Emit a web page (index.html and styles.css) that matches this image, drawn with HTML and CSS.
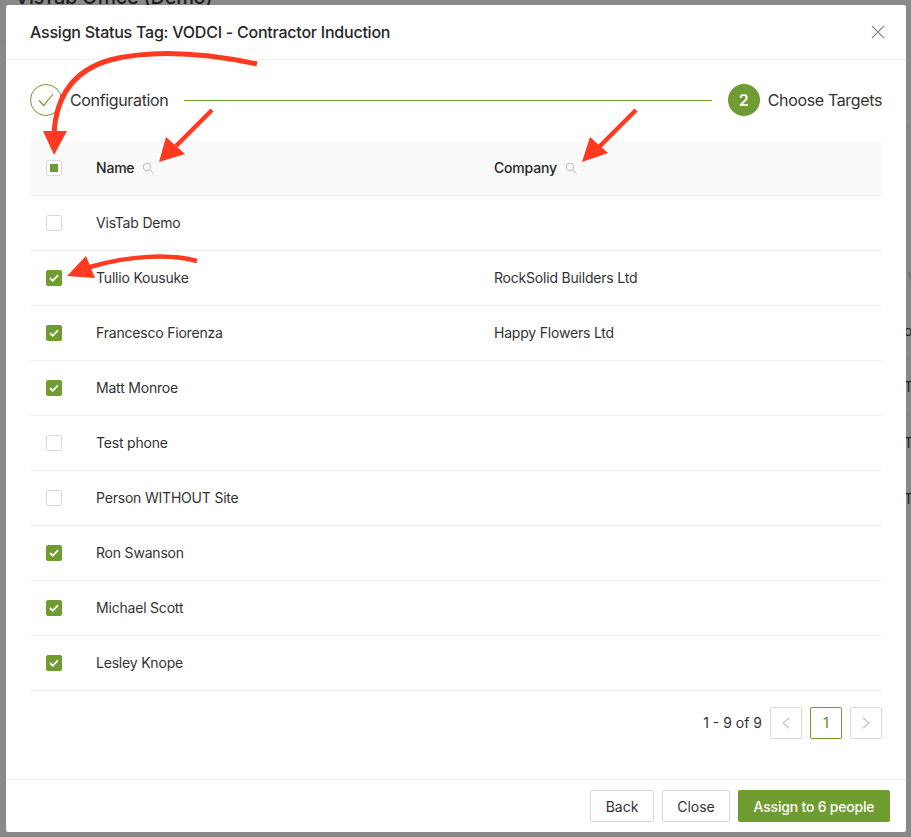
FILE: index.html
```html
<!DOCTYPE html>
<html lang="en">
<head>
<meta charset="utf-8">
<title>Assign Status Tag</title>
<link rel="stylesheet" href="styles.css">
</head>
<body>
<div class="backdrop">
  <div class="bg-title">VisTab Office (Demo)</div>
  <div class="bg-line bg-l1"></div>
  <div class="bg-line bg-l2"></div>
  <div class="bg-line bg-l3"></div>
  <div class="bg-line bg-l4"></div>
  <div class="bg-line bg-l5"></div>
  <div class="bg-line bg-l6"></div>
  <svg class="bg-caret" width="4" height="10" viewBox="0 0 4 10"><path d="M0 0h4v10Z" fill="#777"/></svg>
  <span class="bg-glyph bg-g1">o</span>
  <span class="bg-glyph bg-g2">T</span>
  <span class="bg-glyph bg-g3">T</span>
  <span class="bg-glyph bg-g4">T</span>
</div>
<main class="modal">
  <header class="modal-header">
    <h1 class="modal-title">Assign Status Tag: VODCI - Contractor Induction</h1>
    <svg class="close-icon" width="14" height="14" viewBox="0 0 14 14"><path d="M1 1l12 12M13 1L1 13" stroke="#8c8c8c" stroke-width="1.2" fill="none"/></svg>
  </header>
  <section class="modal-body">
    <div class="steps">
      <span class="step-circle step-done"><svg width="16" height="14" viewBox="0 0 16 14"><path d="M1 7.5l4.8 5L15 1" stroke="#6f9c30" stroke-width="1.2" fill="none"/></svg></span>
      <span class="step-label">Configuration</span>
      <span class="step-line"></span>
      <span class="step-circle step-active">2</span>
      <span class="step-label">Choose Targets</span>
    </div>
    <table class="people">
      <thead>
        <tr>
          <th class="col-check"><span class="box box-partial"></span></th>
          <th class="col-name"><span class="th-inner">Name <svg class="search" width="12" height="12" viewBox="0 0 12 12"><circle cx="5" cy="5" r="3.8" stroke="#bfbfbf" fill="none"/><path d="M7.8 7.8L11.5 11.5" stroke="#bfbfbf" fill="none"/></svg></span></th>
          <th class="col-company"><span class="th-inner">Company <svg class="search" width="12" height="12" viewBox="0 0 12 12"><circle cx="5" cy="5" r="3.8" stroke="#bfbfbf" fill="none"/><path d="M7.8 7.8L11.5 11.5" stroke="#bfbfbf" fill="none"/></svg></span></th>
        </tr>
      </thead>
      <tbody>
        <tr><td><span class="box"></span></td><td>VisTab Demo</td><td></td></tr>
        <tr><td><span class="box box-on"><svg width="10" height="8" viewBox="0 0 10 8"><path d="M1 4l2.8 2.8L9 1.2" stroke="#fff" stroke-width="1.8" fill="none"/></svg></span></td><td>Tullio Kousuke</td><td>RockSolid Builders Ltd</td></tr>
        <tr><td><span class="box box-on"><svg width="10" height="8" viewBox="0 0 10 8"><path d="M1 4l2.8 2.8L9 1.2" stroke="#fff" stroke-width="1.8" fill="none"/></svg></span></td><td>Francesco Fiorenza</td><td>Happy Flowers Ltd</td></tr>
        <tr><td><span class="box box-on"><svg width="10" height="8" viewBox="0 0 10 8"><path d="M1 4l2.8 2.8L9 1.2" stroke="#fff" stroke-width="1.8" fill="none"/></svg></span></td><td>Matt Monroe</td><td></td></tr>
        <tr><td><span class="box"></span></td><td>Test phone</td><td></td></tr>
        <tr><td><span class="box"></span></td><td>Person WITHOUT Site</td><td></td></tr>
        <tr><td><span class="box box-on"><svg width="10" height="8" viewBox="0 0 10 8"><path d="M1 4l2.8 2.8L9 1.2" stroke="#fff" stroke-width="1.8" fill="none"/></svg></span></td><td>Ron Swanson</td><td></td></tr>
        <tr><td><span class="box box-on"><svg width="10" height="8" viewBox="0 0 10 8"><path d="M1 4l2.8 2.8L9 1.2" stroke="#fff" stroke-width="1.8" fill="none"/></svg></span></td><td>Michael Scott</td><td></td></tr>
        <tr><td><span class="box box-on"><svg width="10" height="8" viewBox="0 0 10 8"><path d="M1 4l2.8 2.8L9 1.2" stroke="#fff" stroke-width="1.8" fill="none"/></svg></span></td><td>Lesley Knope</td><td></td></tr>
      </tbody>
    </table>
    <nav class="pager">
      <span class="pager-total">1 - 9 of 9</span>
      <span class="page-btn"><svg width="10" height="12" viewBox="0 0 10 12"><path d="M8 1L2 6l6 5" stroke="#bfbfbf" stroke-width="1.1" fill="none"/></svg></span>
      <span class="page-btn page-current">1</span>
      <span class="page-btn"><svg width="10" height="12" viewBox="0 0 10 12"><path d="M2 1l6 5-6 5" stroke="#bfbfbf" stroke-width="1.1" fill="none"/></svg></span>
    </nav>
  </section>
  <footer class="modal-footer">
    <button class="btn btn-back">Back</button>
    <button class="btn btn-close">Close</button>
    <button class="btn btn-primary">Assign to 6 people</button>
  </footer>
</main>
<svg class="annotations" width="911" height="837" viewBox="0 0 911 837">
  <g fill="none" stroke="#ff3a20" stroke-linecap="butt">
    <path d="M257 64C200 52 150 50 110 60C75 70 56 95 54 134" stroke-width="5"/>
    <path d="M212 110L176 146" stroke-width="4.5"/>
    <path d="M636 110L597 149" stroke-width="4.5"/>
    <path d="M197 261C170 254 130 255 90 267" stroke-width="4.5"/>
  </g>
  <g fill="#ff3a20">
    <path d="M43 131H67L54 155Z"/>
    <path d="M159 162L166 137L185 154Z"/>
    <path d="M582 162L590 137L608 153Z"/>
    <path d="M67 276L86 256L95 278Z"/>
  </g>
</svg>
</body>
</html>
```

FILE: styles.css
```css
* { box-sizing: border-box; }
html, body { margin: 0; height: 100%; }
body {
  width: 911px;
  height: 837px;
  overflow: hidden;
  background: #898989;
  font-family: Inter, "Liberation Sans", sans-serif;
  color: #262626;
  font-size: 14px;
  padding: 5px 5px 5px 6px;
  position: relative;
}
.backdrop { position: absolute; inset: 0; overflow: hidden; }
.bg-title { position: absolute; left: 15px; top: -15px; font-size: 20px; line-height: 24px; color: #1c1c1c; font-weight: 500; letter-spacing: -0.3px; white-space: nowrap; }
.bg-line { position: absolute; left: 906px; right: 0; height: 1px; background: #808080; }
.bg-l1 { top: 41px; left: 0; }
.bg-l2 { top: 127px; }
.bg-l3 { top: 359px; }
.bg-l4 { top: 415px; }
.bg-l5 { top: 470px; }
.bg-l6 { top: 526px; }
.bg-caret { position: absolute; left: 907px; top: 272px; }
.bg-glyph { position: absolute; left: 904px; font-size: 14px; color: #222; }
.bg-g1 { top: 322px; }
.bg-g2 { top: 378px; }
.bg-g3 { top: 434px; }
.bg-g4 { top: 490px; }
.modal {
  position: relative;
  width: 900px;
  height: 827px;
  background: #fff;
  border-radius: 2px;
  display: flex;
  flex-direction: column;
}
.modal-header {
  height: 55px;
  padding: 0 21px 0 24px;
  border-bottom: 1px solid #f0f0f0;
  display: flex;
  align-items: center;
  justify-content: space-between;
}
.modal-title { margin: 0; font-size: 16px; font-weight: 500; color: #262626; letter-spacing: -0.23px; }
.close-icon { display: block; }
.modal-body { flex: 1; padding: 24px 24px 0; }
.steps { display: flex; align-items: center; height: 32px; margin-bottom: 25px; }
.step-circle {
  width: 32px; height: 32px; border-radius: 50%;
  display: flex; align-items: center; justify-content: center;
  flex: none;
}
.step-done { border: 1px solid #6f9c30; }
.step-active { background: #6f9c30; color: #fff; font-size: 16px; font-weight: 600; }
.step-label { margin-left: 8px; font-size: 16px; color: #333; letter-spacing: -0.35px; white-space: nowrap; }
.step-line { flex: 1; height: 1px; background: #6f9c30; margin: 0 16px; }
.people { width: 852px; border-collapse: collapse; table-layout: fixed; }
.people th, .people td { height: 55px; padding: 0 16px; border-bottom: 1px solid #f0f0f0; text-align: left; font-size: 14px; color: #333; letter-spacing: -0.2px; }
.people th { height: 54px; background: #fafafa; font-weight: 500; color: #262626; }
.col-check { width: 50px; }
.col-name { width: 398px; }
.th-inner { display: flex; align-items: center; gap: 8px; }
.search { display: block; margin-top: 1px; }
.box {
  display: flex; align-items: center; justify-content: center;
  width: 16px; height: 16px;
  border: 1px solid #d9d9d9; border-radius: 2px; background: #fff;
}
.box-on { background: #6f9c30; border-color: #6f9c30; }
.box-partial::after { content: ""; width: 8px; height: 8px; background: #6f9c30; }
.pager { display: flex; justify-content: flex-end; align-items: center; gap: 8px; margin-top: 16px; }
.pager-total { font-size: 14px; color: #333; }
.page-btn {
  width: 32px; height: 32px;
  border: 1px solid #d9d9d9; border-radius: 2px;
  display: flex; align-items: center; justify-content: center;
  font-size: 14px; font-weight: 500;
}
.page-current { border-color: #6f9c30; color: #6f9c30; }
.modal-footer {
  height: 53px;
  border-top: 1px solid #f0f0f0;
  padding: 10px 16px;
  display: flex;
  justify-content: flex-end;
  gap: 8px;
}
.btn {
  height: 32px;
  padding: 0;
  border: 1px solid #d9d9d9;
  border-radius: 2px;
  background: #fff;
  color: #333;
  font-family: inherit;
  font-size: 14px;
}
.btn-back { width: 64px; }
.btn-close { width: 68px; }
.btn-primary { width: 152px; background: #6f9c30; border-color: #6f9c30; color: #fff; font-weight: 500; letter-spacing: -0.2px; }
.annotations { position: absolute; left: 0; top: 0; pointer-events: none; }
```
